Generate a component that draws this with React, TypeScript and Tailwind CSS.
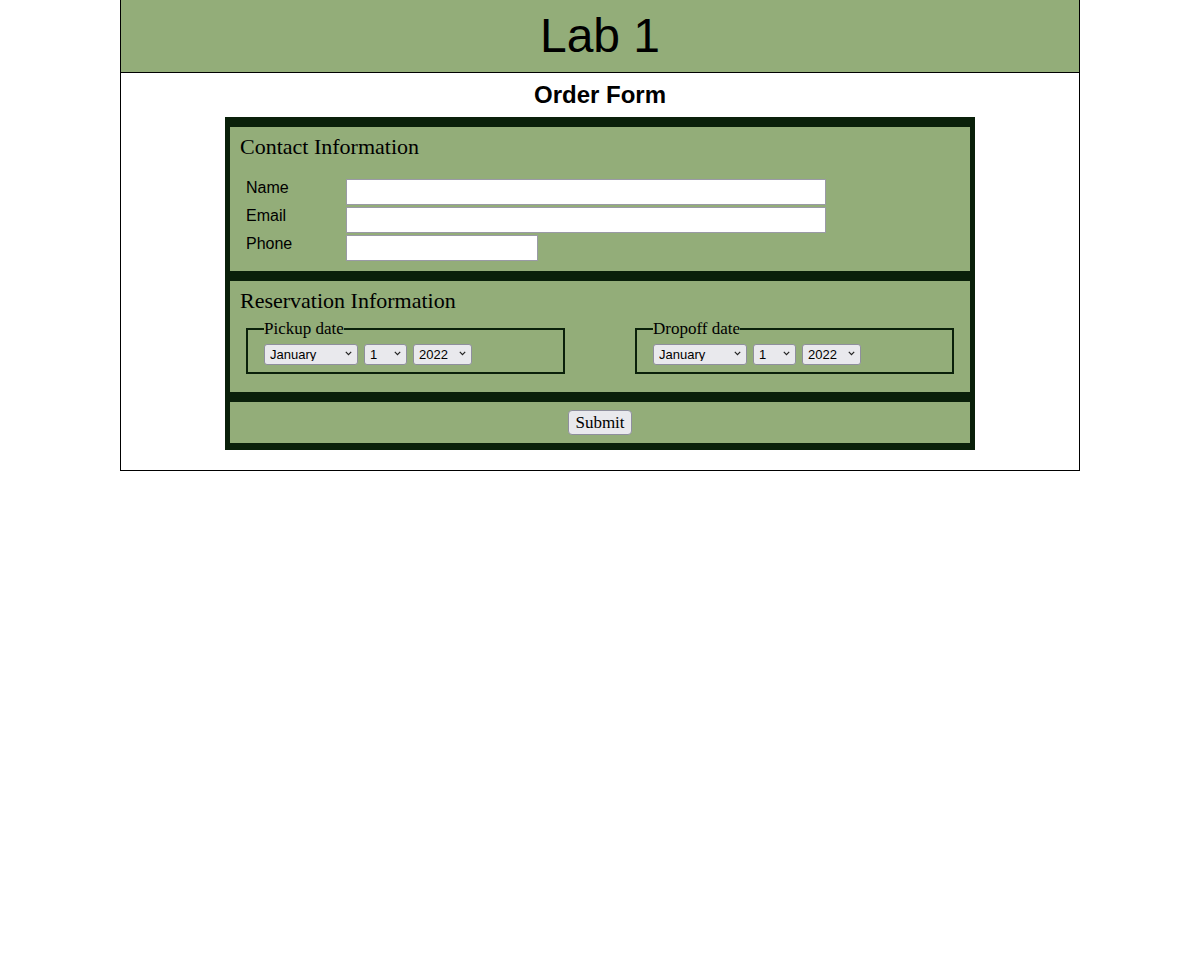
import React from 'react';

const months = ['January', 'February', 'March', 'April', 'May', 'June', 'July', 'August', 'September', 'October', 'November', 'December'];
const days = Array.from({ length: 31 }, (_, i) => i + 1);
const years = [2022, 2023, 2024];

const Chevron = () => (
  <svg className="pointer-events-none absolute right-[6px] top-[9px]" width="7" height="5" viewBox="0 0 7 5">
    <path d="M0.8 0.8 L3.5 3.6 L6.2 0.8" fill="none" stroke="#222" strokeWidth="1.2" />
  </svg>
);

const DropDown = ({ width, options }: { width: string; options: (string | number)[] }) => (
  <div className="relative inline-block">
    <select
      className={`${width} h-[21px] appearance-none rounded-[3px] border border-[#8f8f9d] bg-[#e9e9ed] pl-[5px] text-[13px] leading-none text-black`}
      style={{ fontFamily: '"Liberation Sans", Arial, sans-serif' }}
    >
      {options.map(o => (
        <option key={o} value={o}>{o}</option>
      ))}
    </select>
    <Chevron />
  </div>
);

const DateField = ({ legend }: { legend: string }) => (
  <fieldset className="w-[319px] border-2 border-[#0a200a] px-[16px] pb-[6px]">
    <legend className="px-0 text-[17px] leading-[20px]">{legend}</legend>
    <div className="mt-[3px] flex gap-[6px]">
      <DropDown width="w-[94px]" options={months} />
      <DropDown width="w-[43px]" options={days} />
      <DropDown width="w-[59px]" options={years} />
    </div>
  </fieldset>
);

const contactRows = [
  { label: 'Name', width: 'w-[480px]' },
  { label: 'Email', width: 'w-[480px]' },
  { label: 'Phone', width: 'w-[192px]' },
];

const App = () => {
  return (
    <div className="min-h-screen bg-white text-black" style={{ fontFamily: '"Liberation Sans", Arial, sans-serif' }}>
      <div className="mx-auto w-[960px] border-x border-b border-black pb-[20px]">
        {/* Header */}
        <div className="flex h-[73px] items-center justify-center border-b border-black bg-[#93ad79]">
          <h1 className="text-[48px] leading-none">Lab 1</h1>
        </div>

        <h2 className="mt-[8px] mb-[8px] text-center text-[24px] font-bold leading-[28px]">Order Form</h2>

        <form
          className="mx-auto flex w-[750px] flex-col gap-[10px] bg-[#0a200a] px-[5px] pt-[10px] pb-[7px]"
          style={{ fontFamily: '"Liberation Serif", Georgia, serif' }}
          onSubmit={e => e.preventDefault()}
        >
          {/* Contact */}
          <section className="bg-[#93ad79] px-[10px] pt-[7px] pb-[10px]">
            <h3 className="text-[22px] leading-[26px]">Contact Information</h3>
            <div className="mt-[19px] flex flex-col gap-[2px] pl-[6px]" style={{ fontFamily: '"Liberation Sans", Arial, sans-serif' }}>
              {contactRows.map(row => (
                <div key={row.label} className="flex items-start">
                  <label className="w-[100px] text-[16px] leading-[18px]">{row.label}</label>
                  <input
                    type="text"
                    className={`${row.width} h-[26px] border border-[#9a9aa6] bg-white px-[3px] text-[13px]`}
                  />
                </div>
              ))}
            </div>
          </section>

          {/* Reservation */}
          <section className="bg-[#93ad79] px-[10px] pt-[7px] pb-[18px]">
            <h3 className="text-[22px] leading-[26px]">Reservation Information</h3>
            <div className="mt-[5px] flex justify-between px-[6px]">
              <DateField legend="Pickup date" />
              <DateField legend="Dropoff date" />
            </div>
          </section>

          {/* Submit */}
          <section className="flex justify-center bg-[#93ad79] py-[8px]">
            <button
              type="submit"
              className="h-[25px] rounded-[4px] border border-[#8f8f9d] bg-[#e9e9ed] px-[6px] text-[17px] leading-none"
            >
              Submit
            </button>
          </section>
        </form>
      </div>
    </div>
  );
};

export default App;
